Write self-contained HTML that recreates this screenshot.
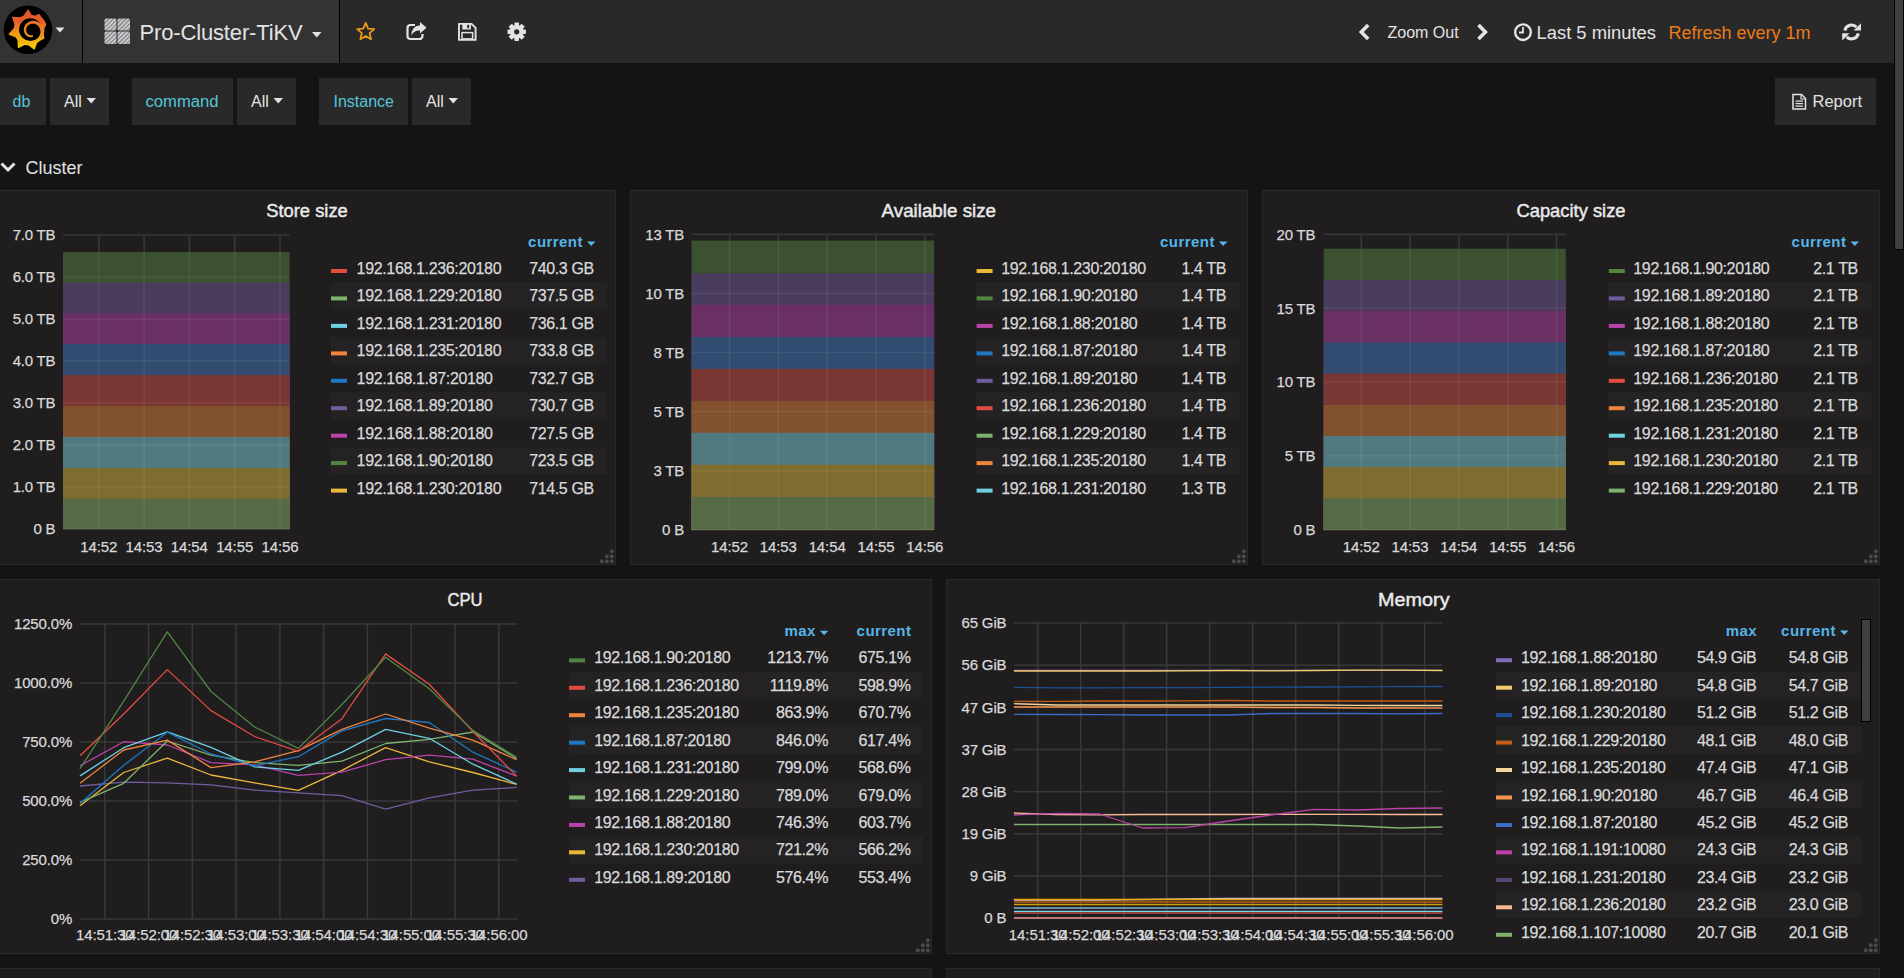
<!DOCTYPE html>
<html><head><meta charset="utf-8"><title>Pro-Cluster-TiKV - Grafana</title>
<style>
html,body{margin:0;padding:0;width:1904px;height:978px;overflow:hidden;background:#141414;}
body{font-family:"Liberation Sans", sans-serif;color:#d8d9da;position:relative;}
svg{position:absolute;left:0;top:0;}
svg text{font-family:"Liberation Sans", sans-serif;}
</style></head>
<body>
<svg width="1904" height="978" viewBox="0 0 1904 978">
<defs>
<linearGradient id="lg" gradientUnits="userSpaceOnUse" x1="0" y1="10" x2="0" y2="49"><stop offset="0" stop-color="#e2542c"/><stop offset="0.3" stop-color="#e65e2a"/><stop offset="0.6" stop-color="#ee9a1a"/><stop offset="1" stop-color="#f4d000"/></linearGradient><linearGradient id="lg2" gradientUnits="userSpaceOnUse" x1="0" y1="18" x2="0" y2="42"><stop offset="0" stop-color="#e8662a"/><stop offset="1" stop-color="#efa016"/></linearGradient>
<pattern id="hatch" width="3" height="3" patternUnits="userSpaceOnUse" patternTransform="rotate(45)"><rect width="3" height="3" fill="#c9c9cb"/><rect width="1" height="3" fill="#7a7a80"/></pattern>
</defs>
<!-- navbar -->
<rect x="0" y="0" width="1894" height="63" fill="#292929"/>
<rect x="0" y="0" width="339" height="63" fill="#333333"/>
<rect x="82" y="0" width="1" height="63" fill="#000"/>
<rect x="339" y="0" width="1" height="63" fill="#000"/>
<!-- scrollbar -->
<rect x="1894" y="0" width="10" height="250" fill="#000"/>
<rect x="1895" y="0" width="8" height="249" fill="#3f3f3f"/>
<!-- logo -->
<circle cx="28" cy="29.7" r="24.3" fill="#000"/>
<path d="M28.10,10.10 L31.22,15.37 L34.64,16.32 L39.30,14.50 L41.01,17.28 L43.00,19.49 L44.57,22.02 L45.70,24.77 L43.90,28.00 L43.77,30.96 L43.12,34.44 L43.90,38.20 L39.49,40.44 L36.70,42.64 L34.20,49.00 L28.70,44.80 L25.20,44.30 L18.40,47.40 L18.01,39.91 L15.97,37.02 L9.20,34.10 L14.29,28.39 L15.09,24.94 L12.70,17.30 L20.68,17.76 L23.83,16.13 Z" fill="url(#lg)" stroke="url(#lg)" stroke-width="1.2" stroke-linejoin="round"/>
<circle cx="30.4" cy="29.6" r="11.3" fill="#000"/>
<path d="M33.06,36.81 L32.51,36.99 L31.93,37.12 L31.33,37.19 L30.72,37.21 L30.10,37.16 L29.47,37.06 L28.85,36.89 L28.24,36.66 L27.64,36.38 L27.07,36.02 L26.52,35.62 L26.01,35.15 L25.54,34.63 L25.12,34.06 L24.74,33.44 L24.42,32.78 L24.16,32.09 L23.97,31.36 L23.84,30.61 L23.79,29.84 L23.81,29.06 L23.90,28.27 L24.07,27.49 L24.32,26.72 L24.64,25.96 L25.04,25.23 L25.51,24.53 L26.05,23.87 L26.66,23.26 L27.32,22.70 L28.05,22.20 L28.83,21.77 L29.66,21.41 L30.53,21.13 L31.42,20.93 L32.35,20.81 L33.29,20.77 L34.24,20.83 L35.19,20.98 L36.13,21.22 L37.06,21.55 L37.96,21.97 L38.82,22.48 L39.64,23.07 L40.41,23.75 L41.12,24.50 L41.76,25.32 L42.32,26.20 L42.81,27.15 L43.21,28.14 L43.51,29.18 L43.72,30.25 L43.83,31.35 L43.83,32.46 L43.73,33.58 L43.53,34.69 L43.21,35.79 L42.80,36.87 L42.27,37.91 L41.65,38.90 L38.89,36.59 L39.34,35.87 L39.71,35.13 L40.01,34.37 L40.23,33.58 L40.38,32.79 L40.45,31.99 L40.44,31.19 L40.36,30.41 L40.21,29.65 L40.00,28.91 L39.71,28.20 L39.36,27.52 L38.96,26.89 L38.50,26.30 L37.99,25.77 L37.45,25.29 L36.86,24.87 L36.24,24.51 L35.60,24.21 L34.94,23.97 L34.27,23.80 L33.60,23.70 L32.92,23.66 L32.25,23.68 L31.59,23.77 L30.95,23.92 L30.33,24.12 L29.75,24.38 L29.19,24.69 L28.67,25.04 L28.20,25.44 L27.77,25.87 L27.39,26.34 L27.05,26.84 L26.77,27.36 L26.54,27.90 L26.37,28.45 L26.25,29.01 L26.18,29.56 L26.17,30.12 L26.21,30.67 L26.30,31.20 L26.44,31.71 L26.63,32.21 L26.86,32.67 L27.12,33.11 L27.43,33.51 L27.76,33.88 L28.12,34.21 L28.51,34.50 L28.92,34.74 L29.34,34.95 L29.77,35.11 L30.21,35.22 L30.65,35.29 L31.09,35.32 L31.53,35.31 L31.95,35.26 L32.36,35.16 L32.75,35.03 Z" fill="url(#lg2)"/>
<path d="M55.5 27.5 h9 l-4.5 5 z" fill="#e3e3e3"/>
<!-- grid icon -->
<g>
<rect x="104.5" y="18.5" width="12" height="12" rx="1.5" fill="url(#hatch)"/>
<rect x="117.5" y="18.5" width="12.5" height="12" rx="1.5" fill="url(#hatch)"/>
<rect x="104.5" y="31.5" width="12" height="12.5" rx="1.5" fill="url(#hatch)"/>
<rect x="117.5" y="31.5" width="12.5" height="12.5" rx="1.5" fill="url(#hatch)"/>
</g>
<text x="139.5" y="40" font-size="22" fill="#e3e3e3" letter-spacing="-0.15">Pro-Cluster-TiKV</text>
<path d="M312 32 h9.5 l-4.75 5.5 z" fill="#e3e3e3"/>
<!-- star -->
<path d="M365.70,22.90 L368.11,28.58 L374.26,29.12 L369.60,33.17 L370.99,39.18 L365.70,36.00 L360.41,39.18 L361.80,33.17 L357.14,29.12 L363.29,28.58 Z" fill="none" stroke="#eb9a18" stroke-width="1.8" stroke-linejoin="round"/>
<!-- share -->
<g fill="none" stroke="#e3e3e3" stroke-width="2.2">
<path d="M415,25 h-4.5 a3,3 0 0 0 -3,3 v8 a3,3 0 0 0 3,3 h9 a3,3 0 0 0 3,-3 v-2"/>
</g>
<path d="M420,22 L426.5,27.8 L420,33.5 L420,30.5 Q413,30.3 411.5,36 Q411,26 420,25.2 Z" fill="#e3e3e3"/>
<!-- save -->
<path d="M459,23.9 h12.6 l4,4 v12 h-16.6 z" fill="none" stroke="#e3e3e3" stroke-width="1.9" stroke-linejoin="round"/>
<rect x="462.3" y="23.9" width="8.6" height="5.6" fill="#e3e3e3"/>
<rect x="467.2" y="24.8" width="1.9" height="3.4" fill="#292929"/>
<rect x="462" y="32.6" width="10.6" height="6.3" fill="none" stroke="#e3e3e3" stroke-width="1.5"/>
<!-- gear -->
<g transform="translate(516.7,31.8)" fill="#e3e3e3">
<g id="teeth">
<rect x="-2.3" y="-9.2" width="4.6" height="18.4" rx="0.8"/>
<rect x="-2.3" y="-9.2" width="4.6" height="18.4" rx="0.8" transform="rotate(45)"/>
<rect x="-2.3" y="-9.2" width="4.6" height="18.4" rx="0.8" transform="rotate(90)"/>
<rect x="-2.3" y="-9.2" width="4.6" height="18.4" rx="0.8" transform="rotate(135)"/>
</g>
<circle r="6.8"/>
<circle r="2.6" fill="#292929"/>
</g>
<!-- right side nav -->
<path d="M1368.2,25 L1361.3,32 L1368.2,39" fill="none" stroke="#e3e3e3" stroke-width="3.6"/>
<text x="1387.5" y="38.3" font-size="16" fill="#e3e3e3">Zoom Out</text>
<path d="M1478.5,25 L1485.4,32 L1478.5,39" fill="none" stroke="#e3e3e3" stroke-width="3.6"/>
<circle cx="1523" cy="32.2" r="7.8" fill="none" stroke="#e3e3e3" stroke-width="2.4"/>
<path d="M1523,27 v5.5 h-4" fill="none" stroke="#e3e3e3" stroke-width="1.8"/>
<text x="1536.5" y="38.8" font-size="18" fill="#e3e3e3" textLength="119.5" lengthAdjust="spacingAndGlyphs">Last 5 minutes</text>
<text x="1668.5" y="38.8" font-size="18" fill="#eb7b18" textLength="142" lengthAdjust="spacingAndGlyphs">Refresh every 1m</text>
<g fill="none" stroke="#e3e3e3" stroke-width="3.1">
<path d="M1844.85,30.47 A6.9,6.9 0 0 1 1856.48,27.02"/>
<path d="M1858.35,33.33 A6.9,6.9 0 0 1 1846.72,36.78"/>
</g>
<path d="M1861,23.3 V30.6 H1853.6 Z" fill="#e3e3e3"/>
<path d="M1842.2,40.5 V33.2 H1849.6 Z" fill="#e3e3e3"/>
<!-- template variables -->
<g fill="#292929">
<rect x="-2" y="78" width="48" height="47"/>
<rect x="50" y="78" width="59" height="47"/>
<rect x="132" y="78" width="101" height="47"/>
<rect x="237" y="78" width="59" height="47"/>
<rect x="319" y="78" width="89" height="47"/>
<rect x="412" y="78" width="59" height="47"/>
<rect x="1775" y="78" width="101" height="47"/>
</g>
<g font-size="16">
<text x="12.5" y="107" fill="#52c5d8">db</text>
<text x="64" y="107" fill="#e3e3e3">All</text>
<text x="145.5" y="107" fill="#52c5d8" textLength="73" lengthAdjust="spacingAndGlyphs">command</text>
<text x="251" y="107" fill="#e3e3e3">All</text>
<text x="333.5" y="107" fill="#52c5d8">Instance</text>
<text x="426" y="107" fill="#e3e3e3">All</text>
<text x="1812.5" y="107" fill="#e3e3e3" textLength="49.5" lengthAdjust="spacingAndGlyphs">Report</text>
</g>
<path d="M86.5 98 h9.5 l-4.75 5.5 z" fill="#e3e3e3"/>
<path d="M273.5 98 h9.5 l-4.75 5.5 z" fill="#e3e3e3"/>
<path d="M448.5 98 h9.5 l-4.75 5.5 z" fill="#e3e3e3"/>
<!-- report icon -->
<path d="M1793,94.5 h8.5 l4,4 v10.5 h-12.5 z" fill="none" stroke="#e3e3e3" stroke-width="1.5"/>
<path d="M1801,94.5 v4.5 h4.5" fill="none" stroke="#e3e3e3" stroke-width="1.2"/>
<rect x="1795.5" y="100.5" width="7.5" height="1.2" fill="#e3e3e3"/>
<rect x="1795.5" y="103" width="7.5" height="1.2" fill="#e3e3e3"/>
<rect x="1795.5" y="105.5" width="7.5" height="1.2" fill="#e3e3e3"/>
<!-- cluster row -->
<path d="M1.5,163.5 L8,170 L14.5,163.5" fill="none" stroke="#e3e3e3" stroke-width="3"/>
<text x="25.5" y="174" font-size="18" fill="#e3e3e3" textLength="57" lengthAdjust="spacingAndGlyphs">Cluster</text>
<rect x="-1.5" y="190.5" width="617" height="374" fill="#1f1d1e" stroke="#2a2929" stroke-width="1"/>
<text x="307.00" y="217.0" font-size="18" text-anchor="middle" fill="#e9e9ea" font-weight="normal" letter-spacing="0" stroke="#e9e9ea" stroke-width="0.45" textLength="81.5" lengthAdjust="spacingAndGlyphs">Store size</text>
<circle cx="611.8" cy="561.2" r="2" fill="#4a4a4a"/>
<circle cx="606.8" cy="561.2" r="2" fill="#4a4a4a"/>
<circle cx="601.8" cy="561.2" r="2" fill="#4a4a4a"/>
<circle cx="611.8" cy="556.2" r="2" fill="#4a4a4a"/>
<circle cx="606.8" cy="556.2" r="2" fill="#4a4a4a"/>
<circle cx="611.8" cy="551.2" r="2" fill="#4a4a4a"/>
<rect x="63.0" y="528.25" width="226.5" height="1.5" fill="#3a393a"/>
<rect x="63.0" y="486.25" width="226.5" height="1.5" fill="#3a393a"/>
<rect x="63.0" y="444.25" width="226.5" height="1.5" fill="#3a393a"/>
<rect x="63.0" y="402.25" width="226.5" height="1.5" fill="#3a393a"/>
<rect x="63.0" y="360.25" width="226.5" height="1.5" fill="#3a393a"/>
<rect x="63.0" y="318.25" width="226.5" height="1.5" fill="#3a393a"/>
<rect x="63.0" y="276.25" width="226.5" height="1.5" fill="#3a393a"/>
<rect x="63.0" y="234.25" width="226.5" height="1.5" fill="#3a393a"/>
<rect x="98.05" y="235.0" width="1.5" height="294.0" fill="#3a393a"/>
<rect x="143.35" y="235.0" width="1.5" height="294.0" fill="#3a393a"/>
<rect x="188.65" y="235.0" width="1.5" height="294.0" fill="#3a393a"/>
<rect x="233.95" y="235.0" width="1.5" height="294.0" fill="#3a393a"/>
<rect x="279.25" y="235.0" width="1.5" height="294.0" fill="#3a393a"/>
<rect x="63.0" y="252.0" width="226.5" height="277.0" fill="#3b512f" />
<rect x="63.0" y="282.7" width="226.5" height="246.3" fill="#4a3c5e" />
<rect x="63.0" y="313.3" width="226.5" height="215.7" fill="#6a3064" />
<rect x="63.0" y="344.0" width="226.5" height="185.0" fill="#314c70" />
<rect x="63.0" y="375.0" width="226.5" height="154.0" fill="#7a3633" />
<rect x="63.0" y="406.2" width="226.5" height="122.8" fill="#82512e" />
<rect x="63.0" y="437.0" width="226.5" height="92.0" fill="#517a80" />
<rect x="63.0" y="468.2" width="226.5" height="60.8" fill="#806c2e" />
<rect x="63.0" y="498.4" width="226.5" height="30.6" fill="#546b46" />
<rect x="63.0" y="528.25" width="226.5" height="1.5" fill="#fff" fill-opacity="0.07"/>
<rect x="63.0" y="486.25" width="226.5" height="1.5" fill="#fff" fill-opacity="0.07"/>
<rect x="63.0" y="444.25" width="226.5" height="1.5" fill="#fff" fill-opacity="0.07"/>
<rect x="63.0" y="402.25" width="226.5" height="1.5" fill="#fff" fill-opacity="0.07"/>
<rect x="63.0" y="360.25" width="226.5" height="1.5" fill="#fff" fill-opacity="0.07"/>
<rect x="63.0" y="318.25" width="226.5" height="1.5" fill="#fff" fill-opacity="0.07"/>
<rect x="63.0" y="276.25" width="226.5" height="1.5" fill="#fff" fill-opacity="0.07"/>
<rect x="98.05" y="252.0" width="1.5" height="277.0" fill="#fff" fill-opacity="0.07"/>
<rect x="143.35" y="252.0" width="1.5" height="277.0" fill="#fff" fill-opacity="0.07"/>
<rect x="188.65" y="252.0" width="1.5" height="277.0" fill="#fff" fill-opacity="0.07"/>
<rect x="233.95" y="252.0" width="1.5" height="277.0" fill="#fff" fill-opacity="0.07"/>
<rect x="279.25" y="252.0" width="1.5" height="277.0" fill="#fff" fill-opacity="0.07"/>
<text x="55.40" y="534.4" font-size="15" text-anchor="end" fill="#d8d9da" font-weight="normal" letter-spacing="-0.2"  stroke="#d8d9da" stroke-width="0.25">0 B</text>
<text x="55.40" y="492.4" font-size="15" text-anchor="end" fill="#d8d9da" font-weight="normal" letter-spacing="-0.2"  stroke="#d8d9da" stroke-width="0.25">1.0 TB</text>
<text x="55.40" y="450.4" font-size="15" text-anchor="end" fill="#d8d9da" font-weight="normal" letter-spacing="-0.2"  stroke="#d8d9da" stroke-width="0.25">2.0 TB</text>
<text x="55.40" y="408.4" font-size="15" text-anchor="end" fill="#d8d9da" font-weight="normal" letter-spacing="-0.2"  stroke="#d8d9da" stroke-width="0.25">3.0 TB</text>
<text x="55.40" y="366.4" font-size="15" text-anchor="end" fill="#d8d9da" font-weight="normal" letter-spacing="-0.2"  stroke="#d8d9da" stroke-width="0.25">4.0 TB</text>
<text x="55.40" y="324.4" font-size="15" text-anchor="end" fill="#d8d9da" font-weight="normal" letter-spacing="-0.2"  stroke="#d8d9da" stroke-width="0.25">5.0 TB</text>
<text x="55.40" y="282.4" font-size="15" text-anchor="end" fill="#d8d9da" font-weight="normal" letter-spacing="-0.2"  stroke="#d8d9da" stroke-width="0.25">6.0 TB</text>
<text x="55.40" y="240.4" font-size="15" text-anchor="end" fill="#d8d9da" font-weight="normal" letter-spacing="-0.2"  stroke="#d8d9da" stroke-width="0.25">7.0 TB</text>
<text x="98.75" y="552.0" font-size="15" text-anchor="middle" fill="#d8d9da" font-weight="normal" letter-spacing="-0.1"  stroke="#d8d9da" stroke-width="0.25">14:52</text>
<text x="144.05" y="552.0" font-size="15" text-anchor="middle" fill="#d8d9da" font-weight="normal" letter-spacing="-0.1"  stroke="#d8d9da" stroke-width="0.25">14:53</text>
<text x="189.35" y="552.0" font-size="15" text-anchor="middle" fill="#d8d9da" font-weight="normal" letter-spacing="-0.1"  stroke="#d8d9da" stroke-width="0.25">14:54</text>
<text x="234.65" y="552.0" font-size="15" text-anchor="middle" fill="#d8d9da" font-weight="normal" letter-spacing="-0.1"  stroke="#d8d9da" stroke-width="0.25">14:55</text>
<text x="279.95" y="552.0" font-size="15" text-anchor="middle" fill="#d8d9da" font-weight="normal" letter-spacing="-0.1"  stroke="#d8d9da" stroke-width="0.25">14:56</text>
<path d="M587.0 241.4 h8.5 l-4.25 4.5 z" fill="#55b5e8"/>
<text x="582.95" y="246.9" font-size="15" text-anchor="end" fill="#55b5e8" font-weight="bold" letter-spacing="0.45" >current</text>
<rect x="331.0" y="269.0" width="16.0" height="4.0" fill="#E24D42" />
<text x="356.60" y="274.0" font-size="16" text-anchor="start" fill="#d8d9da" font-weight="normal" letter-spacing="-0.35"  stroke="#d8d9da" stroke-width="0.25">192.168.1.236:20180</text>
<text x="593.95" y="274.0" font-size="16" text-anchor="end" fill="#d8d9da" font-weight="normal" letter-spacing="-0.35"  stroke="#d8d9da" stroke-width="0.25">740.3 GB</text>
<rect x="331.0" y="282.1" width="276.0" height="27.4" fill="rgba(255,255,255,0.022)" />
<rect x="331.0" y="296.4" width="16.0" height="4.0" fill="#7EB26D" />
<text x="356.60" y="301.4" font-size="16" text-anchor="start" fill="#d8d9da" font-weight="normal" letter-spacing="-0.35"  stroke="#d8d9da" stroke-width="0.25">192.168.1.229:20180</text>
<text x="593.95" y="301.4" font-size="16" text-anchor="end" fill="#d8d9da" font-weight="normal" letter-spacing="-0.35"  stroke="#d8d9da" stroke-width="0.25">737.5 GB</text>
<rect x="331.0" y="323.9" width="16.0" height="4.0" fill="#6ED0E0" />
<text x="356.60" y="328.9" font-size="16" text-anchor="start" fill="#d8d9da" font-weight="normal" letter-spacing="-0.35"  stroke="#d8d9da" stroke-width="0.25">192.168.1.231:20180</text>
<text x="593.95" y="328.9" font-size="16" text-anchor="end" fill="#d8d9da" font-weight="normal" letter-spacing="-0.35"  stroke="#d8d9da" stroke-width="0.25">736.1 GB</text>
<rect x="331.0" y="337.1" width="276.0" height="27.4" fill="rgba(255,255,255,0.022)" />
<rect x="331.0" y="351.4" width="16.0" height="4.0" fill="#EF843C" />
<text x="356.60" y="356.4" font-size="16" text-anchor="start" fill="#d8d9da" font-weight="normal" letter-spacing="-0.35"  stroke="#d8d9da" stroke-width="0.25">192.168.1.235:20180</text>
<text x="593.95" y="356.4" font-size="16" text-anchor="end" fill="#d8d9da" font-weight="normal" letter-spacing="-0.35"  stroke="#d8d9da" stroke-width="0.25">733.8 GB</text>
<rect x="331.0" y="378.8" width="16.0" height="4.0" fill="#1F78C1" />
<text x="356.60" y="383.8" font-size="16" text-anchor="start" fill="#d8d9da" font-weight="normal" letter-spacing="-0.35"  stroke="#d8d9da" stroke-width="0.25">192.168.1.87:20180</text>
<text x="593.95" y="383.8" font-size="16" text-anchor="end" fill="#d8d9da" font-weight="normal" letter-spacing="-0.35"  stroke="#d8d9da" stroke-width="0.25">732.7 GB</text>
<rect x="331.0" y="391.9" width="276.0" height="27.4" fill="rgba(255,255,255,0.022)" />
<rect x="331.0" y="406.2" width="16.0" height="4.0" fill="#705DA0" />
<text x="356.60" y="411.2" font-size="16" text-anchor="start" fill="#d8d9da" font-weight="normal" letter-spacing="-0.35"  stroke="#d8d9da" stroke-width="0.25">192.168.1.89:20180</text>
<text x="593.95" y="411.2" font-size="16" text-anchor="end" fill="#d8d9da" font-weight="normal" letter-spacing="-0.35"  stroke="#d8d9da" stroke-width="0.25">730.7 GB</text>
<rect x="331.0" y="433.7" width="16.0" height="4.0" fill="#BA43A9" />
<text x="356.60" y="438.7" font-size="16" text-anchor="start" fill="#d8d9da" font-weight="normal" letter-spacing="-0.35"  stroke="#d8d9da" stroke-width="0.25">192.168.1.88:20180</text>
<text x="593.95" y="438.7" font-size="16" text-anchor="end" fill="#d8d9da" font-weight="normal" letter-spacing="-0.35"  stroke="#d8d9da" stroke-width="0.25">727.5 GB</text>
<rect x="331.0" y="446.8" width="276.0" height="27.4" fill="rgba(255,255,255,0.022)" />
<rect x="331.0" y="461.1" width="16.0" height="4.0" fill="#508642" />
<text x="356.60" y="466.1" font-size="16" text-anchor="start" fill="#d8d9da" font-weight="normal" letter-spacing="-0.35"  stroke="#d8d9da" stroke-width="0.25">192.168.1.90:20180</text>
<text x="593.95" y="466.1" font-size="16" text-anchor="end" fill="#d8d9da" font-weight="normal" letter-spacing="-0.35"  stroke="#d8d9da" stroke-width="0.25">723.5 GB</text>
<rect x="331.0" y="488.6" width="16.0" height="4.0" fill="#EAB839" />
<text x="356.60" y="493.6" font-size="16" text-anchor="start" fill="#d8d9da" font-weight="normal" letter-spacing="-0.35"  stroke="#d8d9da" stroke-width="0.25">192.168.1.230:20180</text>
<text x="593.95" y="493.6" font-size="16" text-anchor="end" fill="#d8d9da" font-weight="normal" letter-spacing="-0.35"  stroke="#d8d9da" stroke-width="0.25">714.5 GB</text>
<rect x="630.5" y="190.5" width="617" height="374" fill="#1f1d1e" stroke="#2a2929" stroke-width="1"/>
<text x="938.80" y="217.0" font-size="18" text-anchor="middle" fill="#e9e9ea" font-weight="normal" letter-spacing="0" stroke="#e9e9ea" stroke-width="0.45" textLength="114.5" lengthAdjust="spacingAndGlyphs">Available size</text>
<circle cx="1243.8" cy="561.2" r="2" fill="#4a4a4a"/>
<circle cx="1238.8" cy="561.2" r="2" fill="#4a4a4a"/>
<circle cx="1233.8" cy="561.2" r="2" fill="#4a4a4a"/>
<circle cx="1243.8" cy="556.2" r="2" fill="#4a4a4a"/>
<circle cx="1238.8" cy="556.2" r="2" fill="#4a4a4a"/>
<circle cx="1243.8" cy="551.2" r="2" fill="#4a4a4a"/>
<rect x="691.6" y="528.95" width="242.5" height="1.5" fill="#3a393a"/>
<rect x="691.6" y="469.89" width="242.5" height="1.5" fill="#3a393a"/>
<rect x="691.6" y="410.83" width="242.5" height="1.5" fill="#3a393a"/>
<rect x="691.6" y="351.77" width="242.5" height="1.5" fill="#3a393a"/>
<rect x="691.6" y="292.71" width="242.5" height="1.5" fill="#3a393a"/>
<rect x="691.6" y="233.65" width="242.5" height="1.5" fill="#3a393a"/>
<rect x="728.85" y="234.4" width="1.5" height="295.3" fill="#3a393a"/>
<rect x="777.65" y="234.4" width="1.5" height="295.3" fill="#3a393a"/>
<rect x="826.45" y="234.4" width="1.5" height="295.3" fill="#3a393a"/>
<rect x="875.25" y="234.4" width="1.5" height="295.3" fill="#3a393a"/>
<rect x="924.05" y="234.4" width="1.5" height="295.3" fill="#3a393a"/>
<rect x="691.6" y="240.5" width="242.5" height="289.2" fill="#3b512f" />
<rect x="691.6" y="273.3" width="242.5" height="256.4" fill="#4a3c5e" />
<rect x="691.6" y="304.7" width="242.5" height="225.0" fill="#6a3064" />
<rect x="691.6" y="337.0" width="242.5" height="192.7" fill="#314c70" />
<rect x="691.6" y="369.0" width="242.5" height="160.7" fill="#7a3633" />
<rect x="691.6" y="400.9" width="242.5" height="128.8" fill="#82512e" />
<rect x="691.6" y="432.8" width="242.5" height="96.9" fill="#517a80" />
<rect x="691.6" y="464.7" width="242.5" height="65.0" fill="#806c2e" />
<rect x="691.6" y="497.0" width="242.5" height="32.7" fill="#546b46" />
<rect x="691.6" y="528.95" width="242.5" height="1.5" fill="#fff" fill-opacity="0.07"/>
<rect x="691.6" y="469.89" width="242.5" height="1.5" fill="#fff" fill-opacity="0.07"/>
<rect x="691.6" y="410.83" width="242.5" height="1.5" fill="#fff" fill-opacity="0.07"/>
<rect x="691.6" y="351.77" width="242.5" height="1.5" fill="#fff" fill-opacity="0.07"/>
<rect x="691.6" y="292.71" width="242.5" height="1.5" fill="#fff" fill-opacity="0.07"/>
<rect x="728.85" y="240.5" width="1.5" height="289.2" fill="#fff" fill-opacity="0.07"/>
<rect x="777.65" y="240.5" width="1.5" height="289.2" fill="#fff" fill-opacity="0.07"/>
<rect x="826.45" y="240.5" width="1.5" height="289.2" fill="#fff" fill-opacity="0.07"/>
<rect x="875.25" y="240.5" width="1.5" height="289.2" fill="#fff" fill-opacity="0.07"/>
<rect x="924.05" y="240.5" width="1.5" height="289.2" fill="#fff" fill-opacity="0.07"/>
<text x="684.00" y="535.1" font-size="15" text-anchor="end" fill="#d8d9da" font-weight="normal" letter-spacing="-0.2"  stroke="#d8d9da" stroke-width="0.25">0 B</text>
<text x="684.00" y="476.0" font-size="15" text-anchor="end" fill="#d8d9da" font-weight="normal" letter-spacing="-0.2"  stroke="#d8d9da" stroke-width="0.25">3 TB</text>
<text x="684.00" y="417.0" font-size="15" text-anchor="end" fill="#d8d9da" font-weight="normal" letter-spacing="-0.2"  stroke="#d8d9da" stroke-width="0.25">5 TB</text>
<text x="684.00" y="357.9" font-size="15" text-anchor="end" fill="#d8d9da" font-weight="normal" letter-spacing="-0.2"  stroke="#d8d9da" stroke-width="0.25">8 TB</text>
<text x="684.00" y="298.9" font-size="15" text-anchor="end" fill="#d8d9da" font-weight="normal" letter-spacing="-0.2"  stroke="#d8d9da" stroke-width="0.25">10 TB</text>
<text x="684.00" y="239.8" font-size="15" text-anchor="end" fill="#d8d9da" font-weight="normal" letter-spacing="-0.2"  stroke="#d8d9da" stroke-width="0.25">13 TB</text>
<text x="729.55" y="552.0" font-size="15" text-anchor="middle" fill="#d8d9da" font-weight="normal" letter-spacing="-0.1"  stroke="#d8d9da" stroke-width="0.25">14:52</text>
<text x="778.35" y="552.0" font-size="15" text-anchor="middle" fill="#d8d9da" font-weight="normal" letter-spacing="-0.1"  stroke="#d8d9da" stroke-width="0.25">14:53</text>
<text x="827.15" y="552.0" font-size="15" text-anchor="middle" fill="#d8d9da" font-weight="normal" letter-spacing="-0.1"  stroke="#d8d9da" stroke-width="0.25">14:54</text>
<text x="875.95" y="552.0" font-size="15" text-anchor="middle" fill="#d8d9da" font-weight="normal" letter-spacing="-0.1"  stroke="#d8d9da" stroke-width="0.25">14:55</text>
<text x="924.75" y="552.0" font-size="15" text-anchor="middle" fill="#d8d9da" font-weight="normal" letter-spacing="-0.1"  stroke="#d8d9da" stroke-width="0.25">14:56</text>
<path d="M1218.9 241.4 h8.5 l-4.25 4.5 z" fill="#55b5e8"/>
<text x="1214.85" y="246.9" font-size="15" text-anchor="end" fill="#55b5e8" font-weight="bold" letter-spacing="0.45" >current</text>
<rect x="976.6" y="269.0" width="16.0" height="4.0" fill="#EAB839" />
<text x="1001.20" y="274.0" font-size="16" text-anchor="start" fill="#d8d9da" font-weight="normal" letter-spacing="-0.35"  stroke="#d8d9da" stroke-width="0.25">192.168.1.230:20180</text>
<text x="1226.15" y="274.0" font-size="16" text-anchor="end" fill="#d8d9da" font-weight="normal" letter-spacing="-0.35"  stroke="#d8d9da" stroke-width="0.25">1.4 TB</text>
<rect x="975.8" y="282.1" width="263.8" height="27.4" fill="rgba(255,255,255,0.022)" />
<rect x="976.6" y="296.4" width="16.0" height="4.0" fill="#508642" />
<text x="1001.20" y="301.4" font-size="16" text-anchor="start" fill="#d8d9da" font-weight="normal" letter-spacing="-0.35"  stroke="#d8d9da" stroke-width="0.25">192.168.1.90:20180</text>
<text x="1226.15" y="301.4" font-size="16" text-anchor="end" fill="#d8d9da" font-weight="normal" letter-spacing="-0.35"  stroke="#d8d9da" stroke-width="0.25">1.4 TB</text>
<rect x="976.6" y="323.9" width="16.0" height="4.0" fill="#BA43A9" />
<text x="1001.20" y="328.9" font-size="16" text-anchor="start" fill="#d8d9da" font-weight="normal" letter-spacing="-0.35"  stroke="#d8d9da" stroke-width="0.25">192.168.1.88:20180</text>
<text x="1226.15" y="328.9" font-size="16" text-anchor="end" fill="#d8d9da" font-weight="normal" letter-spacing="-0.35"  stroke="#d8d9da" stroke-width="0.25">1.4 TB</text>
<rect x="975.8" y="337.1" width="263.8" height="27.4" fill="rgba(255,255,255,0.022)" />
<rect x="976.6" y="351.4" width="16.0" height="4.0" fill="#1F78C1" />
<text x="1001.20" y="356.4" font-size="16" text-anchor="start" fill="#d8d9da" font-weight="normal" letter-spacing="-0.35"  stroke="#d8d9da" stroke-width="0.25">192.168.1.87:20180</text>
<text x="1226.15" y="356.4" font-size="16" text-anchor="end" fill="#d8d9da" font-weight="normal" letter-spacing="-0.35"  stroke="#d8d9da" stroke-width="0.25">1.4 TB</text>
<rect x="976.6" y="378.8" width="16.0" height="4.0" fill="#705DA0" />
<text x="1001.20" y="383.8" font-size="16" text-anchor="start" fill="#d8d9da" font-weight="normal" letter-spacing="-0.35"  stroke="#d8d9da" stroke-width="0.25">192.168.1.89:20180</text>
<text x="1226.15" y="383.8" font-size="16" text-anchor="end" fill="#d8d9da" font-weight="normal" letter-spacing="-0.35"  stroke="#d8d9da" stroke-width="0.25">1.4 TB</text>
<rect x="975.8" y="391.9" width="263.8" height="27.4" fill="rgba(255,255,255,0.022)" />
<rect x="976.6" y="406.2" width="16.0" height="4.0" fill="#E24D42" />
<text x="1001.20" y="411.2" font-size="16" text-anchor="start" fill="#d8d9da" font-weight="normal" letter-spacing="-0.35"  stroke="#d8d9da" stroke-width="0.25">192.168.1.236:20180</text>
<text x="1226.15" y="411.2" font-size="16" text-anchor="end" fill="#d8d9da" font-weight="normal" letter-spacing="-0.35"  stroke="#d8d9da" stroke-width="0.25">1.4 TB</text>
<rect x="976.6" y="433.7" width="16.0" height="4.0" fill="#7EB26D" />
<text x="1001.20" y="438.7" font-size="16" text-anchor="start" fill="#d8d9da" font-weight="normal" letter-spacing="-0.35"  stroke="#d8d9da" stroke-width="0.25">192.168.1.229:20180</text>
<text x="1226.15" y="438.7" font-size="16" text-anchor="end" fill="#d8d9da" font-weight="normal" letter-spacing="-0.35"  stroke="#d8d9da" stroke-width="0.25">1.4 TB</text>
<rect x="975.8" y="446.8" width="263.8" height="27.4" fill="rgba(255,255,255,0.022)" />
<rect x="976.6" y="461.1" width="16.0" height="4.0" fill="#EF843C" />
<text x="1001.20" y="466.1" font-size="16" text-anchor="start" fill="#d8d9da" font-weight="normal" letter-spacing="-0.35"  stroke="#d8d9da" stroke-width="0.25">192.168.1.235:20180</text>
<text x="1226.15" y="466.1" font-size="16" text-anchor="end" fill="#d8d9da" font-weight="normal" letter-spacing="-0.35"  stroke="#d8d9da" stroke-width="0.25">1.4 TB</text>
<rect x="976.6" y="488.6" width="16.0" height="4.0" fill="#6ED0E0" />
<text x="1001.20" y="493.6" font-size="16" text-anchor="start" fill="#d8d9da" font-weight="normal" letter-spacing="-0.35"  stroke="#d8d9da" stroke-width="0.25">192.168.1.231:20180</text>
<text x="1226.15" y="493.6" font-size="16" text-anchor="end" fill="#d8d9da" font-weight="normal" letter-spacing="-0.35"  stroke="#d8d9da" stroke-width="0.25">1.3 TB</text>
<rect x="1262.5" y="190.5" width="617" height="374" fill="#1f1d1e" stroke="#2a2929" stroke-width="1"/>
<text x="1571.00" y="217.0" font-size="18" text-anchor="middle" fill="#e9e9ea" font-weight="normal" letter-spacing="0" stroke="#e9e9ea" stroke-width="0.45" textLength="109" lengthAdjust="spacingAndGlyphs">Capacity size</text>
<circle cx="1875.8" cy="561.2" r="2" fill="#4a4a4a"/>
<circle cx="1870.8" cy="561.2" r="2" fill="#4a4a4a"/>
<circle cx="1865.8" cy="561.2" r="2" fill="#4a4a4a"/>
<circle cx="1875.8" cy="556.2" r="2" fill="#4a4a4a"/>
<circle cx="1870.8" cy="556.2" r="2" fill="#4a4a4a"/>
<circle cx="1875.8" cy="551.2" r="2" fill="#4a4a4a"/>
<rect x="1323.7" y="528.95" width="242.1" height="1.5" fill="#3a393a"/>
<rect x="1323.7" y="455.12" width="242.1" height="1.5" fill="#3a393a"/>
<rect x="1323.7" y="381.29" width="242.1" height="1.5" fill="#3a393a"/>
<rect x="1323.7" y="307.46" width="242.1" height="1.5" fill="#3a393a"/>
<rect x="1323.7" y="233.63" width="242.1" height="1.5" fill="#3a393a"/>
<rect x="1360.55" y="234.4" width="1.5" height="295.3" fill="#3a393a"/>
<rect x="1409.35" y="234.4" width="1.5" height="295.3" fill="#3a393a"/>
<rect x="1458.15" y="234.4" width="1.5" height="295.3" fill="#3a393a"/>
<rect x="1506.95" y="234.4" width="1.5" height="295.3" fill="#3a393a"/>
<rect x="1555.75" y="234.4" width="1.5" height="295.3" fill="#3a393a"/>
<rect x="1323.7" y="248.7" width="242.1" height="281.0" fill="#3b512f" />
<rect x="1323.7" y="280.2" width="242.1" height="249.5" fill="#4a3c5e" />
<rect x="1323.7" y="310.9" width="242.1" height="218.8" fill="#6a3064" />
<rect x="1323.7" y="342.4" width="242.1" height="187.3" fill="#314c70" />
<rect x="1323.7" y="373.5" width="242.1" height="156.2" fill="#7a3633" />
<rect x="1323.7" y="405.0" width="242.1" height="124.7" fill="#82512e" />
<rect x="1323.7" y="436.0" width="242.1" height="93.7" fill="#517a80" />
<rect x="1323.7" y="467.1" width="242.1" height="62.6" fill="#806c2e" />
<rect x="1323.7" y="498.2" width="242.1" height="31.5" fill="#546b46" />
<rect x="1323.7" y="528.95" width="242.1" height="1.5" fill="#fff" fill-opacity="0.07"/>
<rect x="1323.7" y="455.12" width="242.1" height="1.5" fill="#fff" fill-opacity="0.07"/>
<rect x="1323.7" y="381.29" width="242.1" height="1.5" fill="#fff" fill-opacity="0.07"/>
<rect x="1323.7" y="307.46" width="242.1" height="1.5" fill="#fff" fill-opacity="0.07"/>
<rect x="1360.55" y="248.7" width="1.5" height="281.0" fill="#fff" fill-opacity="0.07"/>
<rect x="1409.35" y="248.7" width="1.5" height="281.0" fill="#fff" fill-opacity="0.07"/>
<rect x="1458.15" y="248.7" width="1.5" height="281.0" fill="#fff" fill-opacity="0.07"/>
<rect x="1506.95" y="248.7" width="1.5" height="281.0" fill="#fff" fill-opacity="0.07"/>
<rect x="1555.75" y="248.7" width="1.5" height="281.0" fill="#fff" fill-opacity="0.07"/>
<text x="1315.30" y="535.1" font-size="15" text-anchor="end" fill="#d8d9da" font-weight="normal" letter-spacing="-0.2"  stroke="#d8d9da" stroke-width="0.25">0 B</text>
<text x="1315.30" y="461.3" font-size="15" text-anchor="end" fill="#d8d9da" font-weight="normal" letter-spacing="-0.2"  stroke="#d8d9da" stroke-width="0.25">5 TB</text>
<text x="1315.30" y="387.4" font-size="15" text-anchor="end" fill="#d8d9da" font-weight="normal" letter-spacing="-0.2"  stroke="#d8d9da" stroke-width="0.25">10 TB</text>
<text x="1315.30" y="313.6" font-size="15" text-anchor="end" fill="#d8d9da" font-weight="normal" letter-spacing="-0.2"  stroke="#d8d9da" stroke-width="0.25">15 TB</text>
<text x="1315.30" y="239.8" font-size="15" text-anchor="end" fill="#d8d9da" font-weight="normal" letter-spacing="-0.2"  stroke="#d8d9da" stroke-width="0.25">20 TB</text>
<text x="1361.25" y="552.0" font-size="15" text-anchor="middle" fill="#d8d9da" font-weight="normal" letter-spacing="-0.1"  stroke="#d8d9da" stroke-width="0.25">14:52</text>
<text x="1410.05" y="552.0" font-size="15" text-anchor="middle" fill="#d8d9da" font-weight="normal" letter-spacing="-0.1"  stroke="#d8d9da" stroke-width="0.25">14:53</text>
<text x="1458.85" y="552.0" font-size="15" text-anchor="middle" fill="#d8d9da" font-weight="normal" letter-spacing="-0.1"  stroke="#d8d9da" stroke-width="0.25">14:54</text>
<text x="1507.65" y="552.0" font-size="15" text-anchor="middle" fill="#d8d9da" font-weight="normal" letter-spacing="-0.1"  stroke="#d8d9da" stroke-width="0.25">14:55</text>
<text x="1556.45" y="552.0" font-size="15" text-anchor="middle" fill="#d8d9da" font-weight="normal" letter-spacing="-0.1"  stroke="#d8d9da" stroke-width="0.25">14:56</text>
<path d="M1850.5 241.4 h8.5 l-4.25 4.5 z" fill="#55b5e8"/>
<text x="1846.45" y="246.9" font-size="15" text-anchor="end" fill="#55b5e8" font-weight="bold" letter-spacing="0.45" >current</text>
<rect x="1608.8" y="269.0" width="16.0" height="4.0" fill="#508642" />
<text x="1633.30" y="274.0" font-size="16" text-anchor="start" fill="#d8d9da" font-weight="normal" letter-spacing="-0.35"  stroke="#d8d9da" stroke-width="0.25">192.168.1.90:20180</text>
<text x="1857.95" y="274.0" font-size="16" text-anchor="end" fill="#d8d9da" font-weight="normal" letter-spacing="-0.35"  stroke="#d8d9da" stroke-width="0.25">2.1 TB</text>
<rect x="1608.0" y="282.1" width="263.4" height="27.4" fill="rgba(255,255,255,0.022)" />
<rect x="1608.8" y="296.4" width="16.0" height="4.0" fill="#705DA0" />
<text x="1633.30" y="301.4" font-size="16" text-anchor="start" fill="#d8d9da" font-weight="normal" letter-spacing="-0.35"  stroke="#d8d9da" stroke-width="0.25">192.168.1.89:20180</text>
<text x="1857.95" y="301.4" font-size="16" text-anchor="end" fill="#d8d9da" font-weight="normal" letter-spacing="-0.35"  stroke="#d8d9da" stroke-width="0.25">2.1 TB</text>
<rect x="1608.8" y="323.9" width="16.0" height="4.0" fill="#BA43A9" />
<text x="1633.30" y="328.9" font-size="16" text-anchor="start" fill="#d8d9da" font-weight="normal" letter-spacing="-0.35"  stroke="#d8d9da" stroke-width="0.25">192.168.1.88:20180</text>
<text x="1857.95" y="328.9" font-size="16" text-anchor="end" fill="#d8d9da" font-weight="normal" letter-spacing="-0.35"  stroke="#d8d9da" stroke-width="0.25">2.1 TB</text>
<rect x="1608.0" y="337.1" width="263.4" height="27.4" fill="rgba(255,255,255,0.022)" />
<rect x="1608.8" y="351.4" width="16.0" height="4.0" fill="#1F78C1" />
<text x="1633.30" y="356.4" font-size="16" text-anchor="start" fill="#d8d9da" font-weight="normal" letter-spacing="-0.35"  stroke="#d8d9da" stroke-width="0.25">192.168.1.87:20180</text>
<text x="1857.95" y="356.4" font-size="16" text-anchor="end" fill="#d8d9da" font-weight="normal" letter-spacing="-0.35"  stroke="#d8d9da" stroke-width="0.25">2.1 TB</text>
<rect x="1608.8" y="378.8" width="16.0" height="4.0" fill="#E24D42" />
<text x="1633.30" y="383.8" font-size="16" text-anchor="start" fill="#d8d9da" font-weight="normal" letter-spacing="-0.35"  stroke="#d8d9da" stroke-width="0.25">192.168.1.236:20180</text>
<text x="1857.95" y="383.8" font-size="16" text-anchor="end" fill="#d8d9da" font-weight="normal" letter-spacing="-0.35"  stroke="#d8d9da" stroke-width="0.25">2.1 TB</text>
<rect x="1608.0" y="391.9" width="263.4" height="27.4" fill="rgba(255,255,255,0.022)" />
<rect x="1608.8" y="406.2" width="16.0" height="4.0" fill="#EF843C" />
<text x="1633.30" y="411.2" font-size="16" text-anchor="start" fill="#d8d9da" font-weight="normal" letter-spacing="-0.35"  stroke="#d8d9da" stroke-width="0.25">192.168.1.235:20180</text>
<text x="1857.95" y="411.2" font-size="16" text-anchor="end" fill="#d8d9da" font-weight="normal" letter-spacing="-0.35"  stroke="#d8d9da" stroke-width="0.25">2.1 TB</text>
<rect x="1608.8" y="433.7" width="16.0" height="4.0" fill="#6ED0E0" />
<text x="1633.30" y="438.7" font-size="16" text-anchor="start" fill="#d8d9da" font-weight="normal" letter-spacing="-0.35"  stroke="#d8d9da" stroke-width="0.25">192.168.1.231:20180</text>
<text x="1857.95" y="438.7" font-size="16" text-anchor="end" fill="#d8d9da" font-weight="normal" letter-spacing="-0.35"  stroke="#d8d9da" stroke-width="0.25">2.1 TB</text>
<rect x="1608.0" y="446.8" width="263.4" height="27.4" fill="rgba(255,255,255,0.022)" />
<rect x="1608.8" y="461.1" width="16.0" height="4.0" fill="#EAB839" />
<text x="1633.30" y="466.1" font-size="16" text-anchor="start" fill="#d8d9da" font-weight="normal" letter-spacing="-0.35"  stroke="#d8d9da" stroke-width="0.25">192.168.1.230:20180</text>
<text x="1857.95" y="466.1" font-size="16" text-anchor="end" fill="#d8d9da" font-weight="normal" letter-spacing="-0.35"  stroke="#d8d9da" stroke-width="0.25">2.1 TB</text>
<rect x="1608.8" y="488.6" width="16.0" height="4.0" fill="#7EB26D" />
<text x="1633.30" y="493.6" font-size="16" text-anchor="start" fill="#d8d9da" font-weight="normal" letter-spacing="-0.35"  stroke="#d8d9da" stroke-width="0.25">192.168.1.229:20180</text>
<text x="1857.95" y="493.6" font-size="16" text-anchor="end" fill="#d8d9da" font-weight="normal" letter-spacing="-0.35"  stroke="#d8d9da" stroke-width="0.25">2.1 TB</text>
<rect x="-1.5" y="579.5" width="933" height="374" fill="#1f1d1e" stroke="#2a2929" stroke-width="1"/>
<text x="465.00" y="606.0" font-size="18" text-anchor="middle" fill="#e9e9ea" font-weight="normal" letter-spacing="0" stroke="#e9e9ea" stroke-width="0.45" textLength="35" lengthAdjust="spacingAndGlyphs">CPU</text>
<circle cx="927.8" cy="950.2" r="2" fill="#4a4a4a"/>
<circle cx="922.8" cy="950.2" r="2" fill="#4a4a4a"/>
<circle cx="917.8" cy="950.2" r="2" fill="#4a4a4a"/>
<circle cx="927.8" cy="945.2" r="2" fill="#4a4a4a"/>
<circle cx="922.8" cy="945.2" r="2" fill="#4a4a4a"/>
<circle cx="927.8" cy="940.2" r="2" fill="#4a4a4a"/>
<rect x="79.8" y="623.25" width="437.4" height="1.5" fill="#3a393a"/>
<rect x="79.8" y="682.25" width="437.4" height="1.5" fill="#3a393a"/>
<rect x="79.8" y="741.25" width="437.4" height="1.5" fill="#3a393a"/>
<rect x="79.8" y="800.25" width="437.4" height="1.5" fill="#3a393a"/>
<rect x="79.8" y="859.25" width="437.4" height="1.5" fill="#3a393a"/>
<rect x="79.8" y="918.25" width="437.4" height="1.5" fill="#3a393a"/>
<rect x="104.05" y="624.0" width="1.5" height="295.0" fill="#3a393a"/>
<rect x="147.82" y="624.0" width="1.5" height="295.0" fill="#3a393a"/>
<rect x="191.59" y="624.0" width="1.5" height="295.0" fill="#3a393a"/>
<rect x="235.36" y="624.0" width="1.5" height="295.0" fill="#3a393a"/>
<rect x="279.13" y="624.0" width="1.5" height="295.0" fill="#3a393a"/>
<rect x="322.90" y="624.0" width="1.5" height="295.0" fill="#3a393a"/>
<rect x="366.67" y="624.0" width="1.5" height="295.0" fill="#3a393a"/>
<rect x="410.44" y="624.0" width="1.5" height="295.0" fill="#3a393a"/>
<rect x="454.21" y="624.0" width="1.5" height="295.0" fill="#3a393a"/>
<rect x="497.98" y="624.0" width="1.5" height="295.0" fill="#3a393a"/>
<text x="72.15" y="629.2" font-size="15" text-anchor="end" fill="#d8d9da" font-weight="normal" letter-spacing="-0.15"  stroke="#d8d9da" stroke-width="0.25">1250.0%</text>
<text x="72.15" y="688.2" font-size="15" text-anchor="end" fill="#d8d9da" font-weight="normal" letter-spacing="-0.15"  stroke="#d8d9da" stroke-width="0.25">1000.0%</text>
<text x="72.15" y="747.2" font-size="15" text-anchor="end" fill="#d8d9da" font-weight="normal" letter-spacing="-0.15"  stroke="#d8d9da" stroke-width="0.25">750.0%</text>
<text x="72.15" y="806.2" font-size="15" text-anchor="end" fill="#d8d9da" font-weight="normal" letter-spacing="-0.15"  stroke="#d8d9da" stroke-width="0.25">500.0%</text>
<text x="72.15" y="865.2" font-size="15" text-anchor="end" fill="#d8d9da" font-weight="normal" letter-spacing="-0.15"  stroke="#d8d9da" stroke-width="0.25">250.0%</text>
<text x="72.15" y="924.2" font-size="15" text-anchor="end" fill="#d8d9da" font-weight="normal" letter-spacing="-0.15"  stroke="#d8d9da" stroke-width="0.25">0%</text>
<text x="104.75" y="940.0" font-size="15" text-anchor="middle" fill="#d8d9da" font-weight="normal" letter-spacing="-0.1"  stroke="#d8d9da" stroke-width="0.25">14:51:30</text>
<text x="148.52" y="940.0" font-size="15" text-anchor="middle" fill="#d8d9da" font-weight="normal" letter-spacing="-0.1"  stroke="#d8d9da" stroke-width="0.25">14:52:00</text>
<text x="192.29" y="940.0" font-size="15" text-anchor="middle" fill="#d8d9da" font-weight="normal" letter-spacing="-0.1"  stroke="#d8d9da" stroke-width="0.25">14:52:30</text>
<text x="236.06" y="940.0" font-size="15" text-anchor="middle" fill="#d8d9da" font-weight="normal" letter-spacing="-0.1"  stroke="#d8d9da" stroke-width="0.25">14:53:00</text>
<text x="279.83" y="940.0" font-size="15" text-anchor="middle" fill="#d8d9da" font-weight="normal" letter-spacing="-0.1"  stroke="#d8d9da" stroke-width="0.25">14:53:30</text>
<text x="323.60" y="940.0" font-size="15" text-anchor="middle" fill="#d8d9da" font-weight="normal" letter-spacing="-0.1"  stroke="#d8d9da" stroke-width="0.25">14:54:00</text>
<text x="367.37" y="940.0" font-size="15" text-anchor="middle" fill="#d8d9da" font-weight="normal" letter-spacing="-0.1"  stroke="#d8d9da" stroke-width="0.25">14:54:30</text>
<text x="411.14" y="940.0" font-size="15" text-anchor="middle" fill="#d8d9da" font-weight="normal" letter-spacing="-0.1"  stroke="#d8d9da" stroke-width="0.25">14:55:00</text>
<text x="454.91" y="940.0" font-size="15" text-anchor="middle" fill="#d8d9da" font-weight="normal" letter-spacing="-0.1"  stroke="#d8d9da" stroke-width="0.25">14:55:30</text>
<text x="498.68" y="940.0" font-size="15" text-anchor="middle" fill="#d8d9da" font-weight="normal" letter-spacing="-0.1"  stroke="#d8d9da" stroke-width="0.25">14:56:00</text>
<polyline points="80.0,786.0 123.7,782.2 167.3,782.9 211.0,784.9 254.6,790.1 298.3,792.8 342.0,795.7 385.6,809.2 429.3,797.9 472.9,790.1 516.6,787.4" fill="none" stroke="#705DA0" stroke-width="1.3" stroke-linejoin="round"/>
<polyline points="80.0,805.8 123.7,772.5 167.3,758.1 211.0,775.0 254.6,782.9 298.3,790.3 342.0,770.3 385.6,747.7 429.3,761.9 472.9,772.5 516.6,784.4" fill="none" stroke="#EAB839" stroke-width="1.3" stroke-linejoin="round"/>
<polyline points="80.0,765.8 123.7,741.7 167.3,745.0 211.0,762.6 254.6,764.9 298.3,775.4 342.0,772.1 385.6,759.7 429.3,755.2 472.9,759.2 516.6,776.1" fill="none" stroke="#BA43A9" stroke-width="1.3" stroke-linejoin="round"/>
<polyline points="80.0,802.4 123.7,783.3 167.3,741.0 211.0,755.2 254.6,762.6 298.3,765.3 342.0,761.2 385.6,743.5 429.3,739.4 472.9,732.0 516.6,758.5" fill="none" stroke="#7EB26D" stroke-width="1.3" stroke-linejoin="round"/>
<polyline points="80.0,775.9 123.7,747.7 167.3,731.8 211.0,747.3 254.6,766.9 298.3,770.3 342.0,752.2 385.6,729.3 429.3,738.3 472.9,764.2 516.6,784.0" fill="none" stroke="#6ED0E0" stroke-width="1.3" stroke-linejoin="round"/>
<polyline points="80.0,803.6 123.7,765.3 167.3,732.2 211.0,754.0 254.6,765.8 298.3,756.7 342.0,730.9 385.6,718.5 429.3,722.5 472.9,752.2 516.6,772.1" fill="none" stroke="#1F78C1" stroke-width="1.3" stroke-linejoin="round"/>
<polyline points="80.0,783.3 123.7,750.0 167.3,740.1 211.0,767.6 254.6,761.9 298.3,750.7 342.0,729.3 385.6,714.0 429.3,728.2 472.9,740.1 516.6,759.7" fill="none" stroke="#EF843C" stroke-width="1.3" stroke-linejoin="round"/>
<polyline points="80.0,755.8 123.7,714.0 167.3,669.6 211.0,710.6 254.6,736.5 298.3,751.3 342.0,718.7 385.6,653.9 429.3,684.3 472.9,731.5 516.6,776.1" fill="none" stroke="#E24D42" stroke-width="1.3" stroke-linejoin="round"/>
<polyline points="80.0,768.7 123.7,701.2 167.3,631.8 211.0,691.5 254.6,727.0 298.3,748.4 342.0,704.5 385.6,657.3 429.3,688.8 472.9,730.4 516.6,757.4" fill="none" stroke="#508642" stroke-width="1.3" stroke-linejoin="round"/>
<path d="M819.9 630.8 h8.5 l-4.25 4.5 z" fill="#55b5e8"/>
<text x="815.85" y="636.3" font-size="15" text-anchor="end" fill="#55b5e8" font-weight="bold" letter-spacing="0.45" >max</text>
<text x="911.45" y="636.3" font-size="15" text-anchor="end" fill="#55b5e8" font-weight="bold" letter-spacing="0.45" >current</text>
<rect x="569.0" y="658.4" width="16.0" height="4.0" fill="#508642" />
<text x="594.20" y="663.4" font-size="16" text-anchor="start" fill="#d8d9da" font-weight="normal" letter-spacing="-0.35"  stroke="#d8d9da" stroke-width="0.25">192.168.1.90:20180</text>
<text x="828.05" y="663.4" font-size="16" text-anchor="end" fill="#d8d9da" font-weight="normal" letter-spacing="-0.35"  stroke="#d8d9da" stroke-width="0.25">1213.7%</text>
<text x="910.65" y="663.4" font-size="16" text-anchor="end" fill="#d8d9da" font-weight="normal" letter-spacing="-0.35"  stroke="#d8d9da" stroke-width="0.25">675.1%</text>
<rect x="569.0" y="671.5" width="354.0" height="27.4" fill="rgba(255,255,255,0.022)" />
<rect x="569.0" y="685.8" width="16.0" height="4.0" fill="#E24D42" />
<text x="594.20" y="690.8" font-size="16" text-anchor="start" fill="#d8d9da" font-weight="normal" letter-spacing="-0.35"  stroke="#d8d9da" stroke-width="0.25">192.168.1.236:20180</text>
<text x="828.05" y="690.8" font-size="16" text-anchor="end" fill="#d8d9da" font-weight="normal" letter-spacing="-0.35"  stroke="#d8d9da" stroke-width="0.25">1119.8%</text>
<text x="910.65" y="690.8" font-size="16" text-anchor="end" fill="#d8d9da" font-weight="normal" letter-spacing="-0.35"  stroke="#d8d9da" stroke-width="0.25">598.9%</text>
<rect x="569.0" y="713.2" width="16.0" height="4.0" fill="#EF843C" />
<text x="594.20" y="718.2" font-size="16" text-anchor="start" fill="#d8d9da" font-weight="normal" letter-spacing="-0.35"  stroke="#d8d9da" stroke-width="0.25">192.168.1.235:20180</text>
<text x="828.05" y="718.2" font-size="16" text-anchor="end" fill="#d8d9da" font-weight="normal" letter-spacing="-0.35"  stroke="#d8d9da" stroke-width="0.25">863.9%</text>
<text x="910.65" y="718.2" font-size="16" text-anchor="end" fill="#d8d9da" font-weight="normal" letter-spacing="-0.35"  stroke="#d8d9da" stroke-width="0.25">670.7%</text>
<rect x="569.0" y="726.4" width="354.0" height="27.4" fill="rgba(255,255,255,0.022)" />
<rect x="569.0" y="740.7" width="16.0" height="4.0" fill="#1F78C1" />
<text x="594.20" y="745.7" font-size="16" text-anchor="start" fill="#d8d9da" font-weight="normal" letter-spacing="-0.35"  stroke="#d8d9da" stroke-width="0.25">192.168.1.87:20180</text>
<text x="828.05" y="745.7" font-size="16" text-anchor="end" fill="#d8d9da" font-weight="normal" letter-spacing="-0.35"  stroke="#d8d9da" stroke-width="0.25">846.0%</text>
<text x="910.65" y="745.7" font-size="16" text-anchor="end" fill="#d8d9da" font-weight="normal" letter-spacing="-0.35"  stroke="#d8d9da" stroke-width="0.25">617.4%</text>
<rect x="569.0" y="768.1" width="16.0" height="4.0" fill="#6ED0E0" />
<text x="594.20" y="773.1" font-size="16" text-anchor="start" fill="#d8d9da" font-weight="normal" letter-spacing="-0.35"  stroke="#d8d9da" stroke-width="0.25">192.168.1.231:20180</text>
<text x="828.05" y="773.1" font-size="16" text-anchor="end" fill="#d8d9da" font-weight="normal" letter-spacing="-0.35"  stroke="#d8d9da" stroke-width="0.25">799.0%</text>
<text x="910.65" y="773.1" font-size="16" text-anchor="end" fill="#d8d9da" font-weight="normal" letter-spacing="-0.35"  stroke="#d8d9da" stroke-width="0.25">568.6%</text>
<rect x="569.0" y="781.2" width="354.0" height="27.4" fill="rgba(255,255,255,0.022)" />
<rect x="569.0" y="795.5" width="16.0" height="4.0" fill="#7EB26D" />
<text x="594.20" y="800.5" font-size="16" text-anchor="start" fill="#d8d9da" font-weight="normal" letter-spacing="-0.35"  stroke="#d8d9da" stroke-width="0.25">192.168.1.229:20180</text>
<text x="828.05" y="800.5" font-size="16" text-anchor="end" fill="#d8d9da" font-weight="normal" letter-spacing="-0.35"  stroke="#d8d9da" stroke-width="0.25">789.0%</text>
<text x="910.65" y="800.5" font-size="16" text-anchor="end" fill="#d8d9da" font-weight="normal" letter-spacing="-0.35"  stroke="#d8d9da" stroke-width="0.25">679.0%</text>
<rect x="569.0" y="822.9" width="16.0" height="4.0" fill="#BA43A9" />
<text x="594.20" y="827.9" font-size="16" text-anchor="start" fill="#d8d9da" font-weight="normal" letter-spacing="-0.35"  stroke="#d8d9da" stroke-width="0.25">192.168.1.88:20180</text>
<text x="828.05" y="827.9" font-size="16" text-anchor="end" fill="#d8d9da" font-weight="normal" letter-spacing="-0.35"  stroke="#d8d9da" stroke-width="0.25">746.3%</text>
<text x="910.65" y="827.9" font-size="16" text-anchor="end" fill="#d8d9da" font-weight="normal" letter-spacing="-0.35"  stroke="#d8d9da" stroke-width="0.25">603.7%</text>
<rect x="569.0" y="836.0" width="354.0" height="27.4" fill="rgba(255,255,255,0.022)" />
<rect x="569.0" y="850.3" width="16.0" height="4.0" fill="#EAB839" />
<text x="594.20" y="855.3" font-size="16" text-anchor="start" fill="#d8d9da" font-weight="normal" letter-spacing="-0.35"  stroke="#d8d9da" stroke-width="0.25">192.168.1.230:20180</text>
<text x="828.05" y="855.3" font-size="16" text-anchor="end" fill="#d8d9da" font-weight="normal" letter-spacing="-0.35"  stroke="#d8d9da" stroke-width="0.25">721.2%</text>
<text x="910.65" y="855.3" font-size="16" text-anchor="end" fill="#d8d9da" font-weight="normal" letter-spacing="-0.35"  stroke="#d8d9da" stroke-width="0.25">566.2%</text>
<rect x="569.0" y="877.8" width="16.0" height="4.0" fill="#705DA0" />
<text x="594.20" y="882.8" font-size="16" text-anchor="start" fill="#d8d9da" font-weight="normal" letter-spacing="-0.35"  stroke="#d8d9da" stroke-width="0.25">192.168.1.89:20180</text>
<text x="828.05" y="882.8" font-size="16" text-anchor="end" fill="#d8d9da" font-weight="normal" letter-spacing="-0.35"  stroke="#d8d9da" stroke-width="0.25">576.4%</text>
<text x="910.65" y="882.8" font-size="16" text-anchor="end" fill="#d8d9da" font-weight="normal" letter-spacing="-0.35"  stroke="#d8d9da" stroke-width="0.25">553.4%</text>
<rect x="946.5" y="579.5" width="933" height="374" fill="#1f1d1e" stroke="#2a2929" stroke-width="1"/>
<text x="1413.80" y="606.0" font-size="18" text-anchor="middle" fill="#e9e9ea" font-weight="normal" letter-spacing="0" stroke="#e9e9ea" stroke-width="0.45" textLength="71.5" lengthAdjust="spacingAndGlyphs">Memory</text>
<circle cx="1875.8" cy="950.2" r="2" fill="#4a4a4a"/>
<circle cx="1870.8" cy="950.2" r="2" fill="#4a4a4a"/>
<circle cx="1865.8" cy="950.2" r="2" fill="#4a4a4a"/>
<circle cx="1875.8" cy="945.2" r="2" fill="#4a4a4a"/>
<circle cx="1870.8" cy="945.2" r="2" fill="#4a4a4a"/>
<circle cx="1875.8" cy="940.2" r="2" fill="#4a4a4a"/>
<rect x="1013.9" y="622.25" width="428.5" height="1.5" fill="#3a393a"/>
<rect x="1013.9" y="664.42" width="428.5" height="1.5" fill="#3a393a"/>
<rect x="1013.9" y="706.59" width="428.5" height="1.5" fill="#3a393a"/>
<rect x="1013.9" y="748.76" width="428.5" height="1.5" fill="#3a393a"/>
<rect x="1013.9" y="790.93" width="428.5" height="1.5" fill="#3a393a"/>
<rect x="1013.9" y="833.10" width="428.5" height="1.5" fill="#3a393a"/>
<rect x="1013.9" y="875.27" width="428.5" height="1.5" fill="#3a393a"/>
<rect x="1013.9" y="917.44" width="428.5" height="1.5" fill="#3a393a"/>
<rect x="1036.95" y="623.0" width="1.5" height="295.2" fill="#3a393a"/>
<rect x="1079.95" y="623.0" width="1.5" height="295.2" fill="#3a393a"/>
<rect x="1122.95" y="623.0" width="1.5" height="295.2" fill="#3a393a"/>
<rect x="1165.95" y="623.0" width="1.5" height="295.2" fill="#3a393a"/>
<rect x="1208.95" y="623.0" width="1.5" height="295.2" fill="#3a393a"/>
<rect x="1251.95" y="623.0" width="1.5" height="295.2" fill="#3a393a"/>
<rect x="1294.95" y="623.0" width="1.5" height="295.2" fill="#3a393a"/>
<rect x="1337.95" y="623.0" width="1.5" height="295.2" fill="#3a393a"/>
<rect x="1380.95" y="623.0" width="1.5" height="295.2" fill="#3a393a"/>
<rect x="1423.95" y="623.0" width="1.5" height="295.2" fill="#3a393a"/>
<text x="1006.45" y="628.2" font-size="15" text-anchor="end" fill="#d8d9da" font-weight="normal" letter-spacing="-0.15"  stroke="#d8d9da" stroke-width="0.25">65 GiB</text>
<text x="1006.45" y="670.4" font-size="15" text-anchor="end" fill="#d8d9da" font-weight="normal" letter-spacing="-0.15"  stroke="#d8d9da" stroke-width="0.25">56 GiB</text>
<text x="1006.45" y="712.5" font-size="15" text-anchor="end" fill="#d8d9da" font-weight="normal" letter-spacing="-0.15"  stroke="#d8d9da" stroke-width="0.25">47 GiB</text>
<text x="1006.45" y="754.7" font-size="15" text-anchor="end" fill="#d8d9da" font-weight="normal" letter-spacing="-0.15"  stroke="#d8d9da" stroke-width="0.25">37 GiB</text>
<text x="1006.45" y="796.9" font-size="15" text-anchor="end" fill="#d8d9da" font-weight="normal" letter-spacing="-0.15"  stroke="#d8d9da" stroke-width="0.25">28 GiB</text>
<text x="1006.45" y="839.1" font-size="15" text-anchor="end" fill="#d8d9da" font-weight="normal" letter-spacing="-0.15"  stroke="#d8d9da" stroke-width="0.25">19 GiB</text>
<text x="1006.45" y="881.2" font-size="15" text-anchor="end" fill="#d8d9da" font-weight="normal" letter-spacing="-0.15"  stroke="#d8d9da" stroke-width="0.25">9 GiB</text>
<text x="1006.45" y="923.4" font-size="15" text-anchor="end" fill="#d8d9da" font-weight="normal" letter-spacing="-0.15"  stroke="#d8d9da" stroke-width="0.25">0 B</text>
<text x="1037.65" y="940.0" font-size="15" text-anchor="middle" fill="#d8d9da" font-weight="normal" letter-spacing="-0.1"  stroke="#d8d9da" stroke-width="0.25">14:51:30</text>
<text x="1080.65" y="940.0" font-size="15" text-anchor="middle" fill="#d8d9da" font-weight="normal" letter-spacing="-0.1"  stroke="#d8d9da" stroke-width="0.25">14:52:00</text>
<text x="1123.65" y="940.0" font-size="15" text-anchor="middle" fill="#d8d9da" font-weight="normal" letter-spacing="-0.1"  stroke="#d8d9da" stroke-width="0.25">14:52:30</text>
<text x="1166.65" y="940.0" font-size="15" text-anchor="middle" fill="#d8d9da" font-weight="normal" letter-spacing="-0.1"  stroke="#d8d9da" stroke-width="0.25">14:53:00</text>
<text x="1209.65" y="940.0" font-size="15" text-anchor="middle" fill="#d8d9da" font-weight="normal" letter-spacing="-0.1"  stroke="#d8d9da" stroke-width="0.25">14:53:30</text>
<text x="1252.65" y="940.0" font-size="15" text-anchor="middle" fill="#d8d9da" font-weight="normal" letter-spacing="-0.1"  stroke="#d8d9da" stroke-width="0.25">14:54:00</text>
<text x="1295.65" y="940.0" font-size="15" text-anchor="middle" fill="#d8d9da" font-weight="normal" letter-spacing="-0.1"  stroke="#d8d9da" stroke-width="0.25">14:54:30</text>
<text x="1338.65" y="940.0" font-size="15" text-anchor="middle" fill="#d8d9da" font-weight="normal" letter-spacing="-0.1"  stroke="#d8d9da" stroke-width="0.25">14:55:00</text>
<text x="1381.65" y="940.0" font-size="15" text-anchor="middle" fill="#d8d9da" font-weight="normal" letter-spacing="-0.1"  stroke="#d8d9da" stroke-width="0.25">14:55:30</text>
<text x="1424.65" y="940.0" font-size="15" text-anchor="middle" fill="#d8d9da" font-weight="normal" letter-spacing="-0.1"  stroke="#d8d9da" stroke-width="0.25">14:56:00</text>
<polyline points="1013.9,918.0 1056.8,918.0 1099.6,918.0 1142.5,918.0 1185.3,918.0 1228.2,918.0 1271.0,918.0 1313.8,918.0 1356.7,918.0 1399.5,918.0 1442.4,918.0" fill="none" stroke="#F29191" stroke-width="1.3" stroke-linejoin="round"/>
<polyline points="1013.9,913.0 1056.8,913.0 1099.6,913.0 1142.5,913.0 1185.3,913.0 1228.2,913.0 1271.0,913.0 1313.8,913.0 1356.7,913.0 1399.5,913.0 1442.4,913.0" fill="none" stroke="#b84a3e" stroke-width="1.3" stroke-linejoin="round"/>
<polyline points="1013.9,911.4 1056.8,911.4 1099.6,911.4 1142.5,911.4 1185.3,911.4 1228.2,911.4 1271.0,911.4 1313.8,911.4 1356.7,911.4 1399.5,911.4 1442.4,911.4" fill="none" stroke="#70DBED" stroke-width="1.3" stroke-linejoin="round"/>
<polyline points="1013.9,908.0 1056.8,908.0 1099.6,908.0 1142.5,908.0 1185.3,908.0 1228.2,908.0 1271.0,908.0 1313.8,908.0 1356.7,908.0 1399.5,908.0 1442.4,908.0" fill="none" stroke="#82B5D8" stroke-width="1.3" stroke-linejoin="round"/>
<polyline points="1013.9,904.5 1056.8,904.5 1099.6,904.5 1142.5,904.5 1185.3,904.5 1228.2,904.5 1271.0,904.5 1313.8,904.5 1356.7,904.5 1399.5,904.5 1442.4,904.5" fill="none" stroke="#CCA300" stroke-width="1.3" stroke-linejoin="round"/>
<polyline points="1013.9,902.0 1056.8,902.0 1099.6,902.0 1142.5,902.0 1185.3,902.0 1228.2,902.0 1271.0,902.0 1313.8,902.0 1356.7,902.0 1399.5,902.0 1442.4,902.0" fill="none" stroke="#C15C17" stroke-width="1.3" stroke-linejoin="round"/>
<polyline points="1013.9,900.0 1056.8,900.0 1099.6,900.0 1142.5,899.5 1185.3,899.0 1228.2,898.5 1271.0,898.3 1313.8,898.3 1356.7,898.3 1399.5,898.3 1442.4,898.3" fill="none" stroke="#d2bfe6" stroke-width="1.3" stroke-linejoin="round"/>
<polyline points="1013.9,899.5 1056.8,899.5 1099.6,899.5 1142.5,899.5 1185.3,899.5 1228.2,899.5 1271.0,899.5 1313.8,899.5 1356.7,899.5 1399.5,899.5 1442.4,899.5" fill="none" stroke="#E5AC0E" stroke-width="1.3" stroke-linejoin="round"/>
<polyline points="1013.9,824.5 1056.8,824.5 1099.6,824.5 1142.5,824.5 1185.3,824.5 1228.2,824.5 1271.0,824.5 1313.8,824.5 1356.7,826.0 1399.5,828.0 1442.4,827.0" fill="none" stroke="#7EB26D" stroke-width="1.3" stroke-linejoin="round"/>
<polyline points="1013.9,814.3 1056.8,814.3 1099.6,814.3 1142.5,814.3 1185.3,814.3 1228.2,814.3 1271.0,814.3 1313.8,814.3 1356.7,814.3 1399.5,814.3 1442.4,814.3" fill="none" stroke="#584477" stroke-width="1.3" stroke-linejoin="round"/>
<polyline points="1013.9,813.0 1056.8,814.5 1099.6,814.8 1142.5,814.5 1185.3,814.5 1228.2,814.5 1271.0,814.3 1313.8,814.3 1356.7,814.3 1399.5,814.5 1442.4,814.5" fill="none" stroke="#F9BA8F" stroke-width="1.3" stroke-linejoin="round"/>
<polyline points="1013.9,815.0 1056.8,813.3 1099.6,814.0 1142.5,828.0 1185.3,827.7 1228.2,821.0 1271.0,815.0 1313.8,809.3 1356.7,810.0 1399.5,808.5 1442.4,808.0" fill="none" stroke="#BA43A9" stroke-width="1.3" stroke-linejoin="round"/>
<polyline points="1013.9,714.3 1056.8,714.5 1099.6,714.7 1142.5,715.0 1185.3,715.0 1228.2,715.0 1271.0,713.5 1313.8,713.5 1356.7,713.5 1399.5,713.8 1442.4,713.5" fill="none" stroke="#3a6cc8" stroke-width="1.3" stroke-linejoin="round"/>
<polyline points="1013.9,707.0 1056.8,707.0 1099.6,707.0 1142.5,707.0 1185.3,707.0 1228.2,707.0 1271.0,707.5 1313.8,707.5 1356.7,708.0 1399.5,708.0 1442.4,708.2" fill="none" stroke="#F9934E" stroke-width="1.3" stroke-linejoin="round"/>
<polyline points="1013.9,703.7 1056.8,705.0 1099.6,705.0 1142.5,705.0 1185.3,705.0 1228.2,705.0 1271.0,705.0 1313.8,705.0 1356.7,705.3 1399.5,705.5 1442.4,705.5" fill="none" stroke="#F4D598" stroke-width="1.3" stroke-linejoin="round"/>
<polyline points="1013.9,701.3 1056.8,701.3 1099.6,701.0 1142.5,701.0 1185.3,700.8 1228.2,700.5 1271.0,701.0 1313.8,701.0 1356.7,701.0 1399.5,701.0 1442.4,701.0" fill="none" stroke="#C15C17" stroke-width="1.3" stroke-linejoin="round"/>
<polyline points="1013.9,687.4 1056.8,687.8 1099.6,687.8 1142.5,687.6 1185.3,687.6 1228.2,687.4 1271.0,687.2 1313.8,687.0 1356.7,686.8 1399.5,686.6 1442.4,686.5" fill="none" stroke="#1c4f94" stroke-width="1.3" stroke-linejoin="round"/>
<polyline points="1013.9,670.3 1056.8,670.3 1099.6,670.3 1142.5,670.3 1185.3,670.3 1228.2,670.3 1271.0,670.3 1313.8,670.3 1356.7,670.3 1399.5,670.3 1442.4,670.3" fill="none" stroke="#806EB7" stroke-width="1.3" stroke-linejoin="round"/>
<polyline points="1013.9,671.0 1056.8,671.0 1099.6,671.0 1142.5,671.0 1185.3,670.8 1228.2,670.5 1271.0,670.8 1313.8,670.5 1356.7,670.2 1399.5,670.2 1442.4,670.5" fill="none" stroke="#F2C96D" stroke-width="1.3" stroke-linejoin="round"/>
<text x="1757.15" y="636.1" font-size="15" text-anchor="end" fill="#55b5e8" font-weight="bold" letter-spacing="0.45" >max</text>
<path d="M1840.0 630.6 h8.5 l-4.25 4.5 z" fill="#55b5e8"/>
<text x="1835.95" y="636.1" font-size="15" text-anchor="end" fill="#55b5e8" font-weight="bold" letter-spacing="0.45" >current</text>
<rect x="1496.0" y="658.2" width="16.0" height="4.0" fill="#806EB7" />
<text x="1521.00" y="663.2" font-size="16" text-anchor="start" fill="#d8d9da" font-weight="normal" letter-spacing="-0.35"  stroke="#d8d9da" stroke-width="0.25">192.168.1.88:20180</text>
<text x="1756.35" y="663.2" font-size="16" text-anchor="end" fill="#d8d9da" font-weight="normal" letter-spacing="-0.35"  stroke="#d8d9da" stroke-width="0.25">54.9 GiB</text>
<text x="1848.15" y="663.2" font-size="16" text-anchor="end" fill="#d8d9da" font-weight="normal" letter-spacing="-0.35"  stroke="#d8d9da" stroke-width="0.25">54.8 GiB</text>
<rect x="1496.0" y="671.4" width="365.0" height="27.4" fill="rgba(255,255,255,0.022)" />
<rect x="1496.0" y="685.7" width="16.0" height="4.0" fill="#F2C96D" />
<text x="1521.00" y="690.7" font-size="16" text-anchor="start" fill="#d8d9da" font-weight="normal" letter-spacing="-0.35"  stroke="#d8d9da" stroke-width="0.25">192.168.1.89:20180</text>
<text x="1756.35" y="690.7" font-size="16" text-anchor="end" fill="#d8d9da" font-weight="normal" letter-spacing="-0.35"  stroke="#d8d9da" stroke-width="0.25">54.8 GiB</text>
<text x="1848.15" y="690.7" font-size="16" text-anchor="end" fill="#d8d9da" font-weight="normal" letter-spacing="-0.35"  stroke="#d8d9da" stroke-width="0.25">54.7 GiB</text>
<rect x="1496.0" y="713.1" width="16.0" height="4.0" fill="#1c4f94" />
<text x="1521.00" y="718.1" font-size="16" text-anchor="start" fill="#d8d9da" font-weight="normal" letter-spacing="-0.35"  stroke="#d8d9da" stroke-width="0.25">192.168.1.230:20180</text>
<text x="1756.35" y="718.1" font-size="16" text-anchor="end" fill="#d8d9da" font-weight="normal" letter-spacing="-0.35"  stroke="#d8d9da" stroke-width="0.25">51.2 GiB</text>
<text x="1848.15" y="718.1" font-size="16" text-anchor="end" fill="#d8d9da" font-weight="normal" letter-spacing="-0.35"  stroke="#d8d9da" stroke-width="0.25">51.2 GiB</text>
<rect x="1496.0" y="726.3" width="365.0" height="27.4" fill="rgba(255,255,255,0.022)" />
<rect x="1496.0" y="740.6" width="16.0" height="4.0" fill="#C15C17" />
<text x="1521.00" y="745.6" font-size="16" text-anchor="start" fill="#d8d9da" font-weight="normal" letter-spacing="-0.35"  stroke="#d8d9da" stroke-width="0.25">192.168.1.229:20180</text>
<text x="1756.35" y="745.6" font-size="16" text-anchor="end" fill="#d8d9da" font-weight="normal" letter-spacing="-0.35"  stroke="#d8d9da" stroke-width="0.25">48.1 GiB</text>
<text x="1848.15" y="745.6" font-size="16" text-anchor="end" fill="#d8d9da" font-weight="normal" letter-spacing="-0.35"  stroke="#d8d9da" stroke-width="0.25">48.0 GiB</text>
<rect x="1496.0" y="768.0" width="16.0" height="4.0" fill="#F4D598" />
<text x="1521.00" y="773.0" font-size="16" text-anchor="start" fill="#d8d9da" font-weight="normal" letter-spacing="-0.35"  stroke="#d8d9da" stroke-width="0.25">192.168.1.235:20180</text>
<text x="1756.35" y="773.0" font-size="16" text-anchor="end" fill="#d8d9da" font-weight="normal" letter-spacing="-0.35"  stroke="#d8d9da" stroke-width="0.25">47.4 GiB</text>
<text x="1848.15" y="773.0" font-size="16" text-anchor="end" fill="#d8d9da" font-weight="normal" letter-spacing="-0.35"  stroke="#d8d9da" stroke-width="0.25">47.1 GiB</text>
<rect x="1496.0" y="781.2" width="365.0" height="27.4" fill="rgba(255,255,255,0.022)" />
<rect x="1496.0" y="795.5" width="16.0" height="4.0" fill="#F9934E" />
<text x="1521.00" y="800.5" font-size="16" text-anchor="start" fill="#d8d9da" font-weight="normal" letter-spacing="-0.35"  stroke="#d8d9da" stroke-width="0.25">192.168.1.90:20180</text>
<text x="1756.35" y="800.5" font-size="16" text-anchor="end" fill="#d8d9da" font-weight="normal" letter-spacing="-0.35"  stroke="#d8d9da" stroke-width="0.25">46.7 GiB</text>
<text x="1848.15" y="800.5" font-size="16" text-anchor="end" fill="#d8d9da" font-weight="normal" letter-spacing="-0.35"  stroke="#d8d9da" stroke-width="0.25">46.4 GiB</text>
<rect x="1496.0" y="823.0" width="16.0" height="4.0" fill="#3a6cc8" />
<text x="1521.00" y="828.0" font-size="16" text-anchor="start" fill="#d8d9da" font-weight="normal" letter-spacing="-0.35"  stroke="#d8d9da" stroke-width="0.25">192.168.1.87:20180</text>
<text x="1756.35" y="828.0" font-size="16" text-anchor="end" fill="#d8d9da" font-weight="normal" letter-spacing="-0.35"  stroke="#d8d9da" stroke-width="0.25">45.2 GiB</text>
<text x="1848.15" y="828.0" font-size="16" text-anchor="end" fill="#d8d9da" font-weight="normal" letter-spacing="-0.35"  stroke="#d8d9da" stroke-width="0.25">45.2 GiB</text>
<rect x="1496.0" y="836.1" width="365.0" height="27.4" fill="rgba(255,255,255,0.022)" />
<rect x="1496.0" y="850.4" width="16.0" height="4.0" fill="#BA43A9" />
<text x="1521.00" y="855.4" font-size="16" text-anchor="start" fill="#d8d9da" font-weight="normal" letter-spacing="-0.35"  stroke="#d8d9da" stroke-width="0.25">192.168.1.191:10080</text>
<text x="1756.35" y="855.4" font-size="16" text-anchor="end" fill="#d8d9da" font-weight="normal" letter-spacing="-0.35"  stroke="#d8d9da" stroke-width="0.25">24.3 GiB</text>
<text x="1848.15" y="855.4" font-size="16" text-anchor="end" fill="#d8d9da" font-weight="normal" letter-spacing="-0.35"  stroke="#d8d9da" stroke-width="0.25">24.3 GiB</text>
<rect x="1496.0" y="877.9" width="16.0" height="4.0" fill="#584477" />
<text x="1521.00" y="882.9" font-size="16" text-anchor="start" fill="#d8d9da" font-weight="normal" letter-spacing="-0.35"  stroke="#d8d9da" stroke-width="0.25">192.168.1.231:20180</text>
<text x="1756.35" y="882.9" font-size="16" text-anchor="end" fill="#d8d9da" font-weight="normal" letter-spacing="-0.35"  stroke="#d8d9da" stroke-width="0.25">23.4 GiB</text>
<text x="1848.15" y="882.9" font-size="16" text-anchor="end" fill="#d8d9da" font-weight="normal" letter-spacing="-0.35"  stroke="#d8d9da" stroke-width="0.25">23.2 GiB</text>
<rect x="1496.0" y="891.0" width="365.0" height="27.4" fill="rgba(255,255,255,0.022)" />
<rect x="1496.0" y="905.3" width="16.0" height="4.0" fill="#F9BA8F" />
<text x="1521.00" y="910.3" font-size="16" text-anchor="start" fill="#d8d9da" font-weight="normal" letter-spacing="-0.35"  stroke="#d8d9da" stroke-width="0.25">192.168.1.236:20180</text>
<text x="1756.35" y="910.3" font-size="16" text-anchor="end" fill="#d8d9da" font-weight="normal" letter-spacing="-0.35"  stroke="#d8d9da" stroke-width="0.25">23.2 GiB</text>
<text x="1848.15" y="910.3" font-size="16" text-anchor="end" fill="#d8d9da" font-weight="normal" letter-spacing="-0.35"  stroke="#d8d9da" stroke-width="0.25">23.0 GiB</text>
<rect x="1496.0" y="932.8" width="16.0" height="4.0" fill="#7EB26D" />
<text x="1521.00" y="937.8" font-size="16" text-anchor="start" fill="#d8d9da" font-weight="normal" letter-spacing="-0.35"  stroke="#d8d9da" stroke-width="0.25">192.168.1.107:10080</text>
<text x="1756.35" y="937.8" font-size="16" text-anchor="end" fill="#d8d9da" font-weight="normal" letter-spacing="-0.35"  stroke="#d8d9da" stroke-width="0.25">20.7 GiB</text>
<text x="1848.15" y="937.8" font-size="16" text-anchor="end" fill="#d8d9da" font-weight="normal" letter-spacing="-0.35"  stroke="#d8d9da" stroke-width="0.25">20.1 GiB</text>
<rect x="1861.5" y="619.5" width="9" height="102" fill="#404040" stroke="#000" stroke-width="1"/>
<rect x="-1.5" y="968.5" width="933" height="40" fill="#1f1d1e" stroke="#2a2929" stroke-width="1"/>
<rect x="946.5" y="968.5" width="933" height="40" fill="#1f1d1e" stroke="#2a2929" stroke-width="1"/>
</svg>
</body></html>
